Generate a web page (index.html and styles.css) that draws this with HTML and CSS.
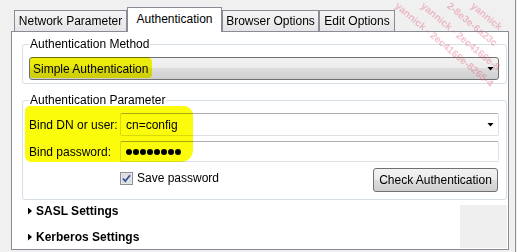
FILE: index.html
```html
<!DOCTYPE html>
<html lang="en">
<head>
  <meta charset="UTF-8" />
  <title>Authentication</title>
  <link rel="stylesheet" href="styles.css">
</head>
<body>
  <div class="window">
    <div class="tabs">
      <div class="tab tab-network">Network Parameter</div>
      <div class="tab tab-auth active">Authentication</div>
      <div class="tab tab-browser">Browser Options</div>
      <div class="tab tab-edit">Edit Options</div>
    </div>

    <div class="panel">
      <!-- Authentication Method -->
      <fieldset class="group">
        <legend>Authentication Method</legend>
        <div class="combo">
          <span class="combo-text">Simple Authentication</span>
          <span class="arrow"></span>
        </div>
      </fieldset>

      <!-- Authentication Parameter -->
      <fieldset class="group group-param">
        <legend>Authentication Parameter</legend>
        <div class="row">
          <label>Bind DN or user:</label>
          <div class="field field-combo">
            <span class="combo-text">cn=config</span>
            <span class="arrow"></span>
          </div>
        </div>
        <div class="row row-pass">
          <label>Bind password:</label>
          <div class="field field-pass">
            <span class="dot"></span><span class="dot"></span><span class="dot"></span><span class="dot"></span>
            <span class="dot"></span><span class="dot"></span><span class="dot"></span><span class="dot"></span>
          </div>
        </div>
        <div class="row row-check">
          <span class="check">
            <svg width="13" height="13" viewBox="0 0 13 13">
              <rect x="0.5" y="0.5" width="12" height="12" fill="#f4f4f4" stroke="#8f8f8f" />
              <rect x="2" y="2" width="9" height="9" fill="#dfe3ea" stroke="#b9bfca" stroke-width="0.5" />
              <path d="M3 6.5 L5.3 9.2 L10 3.3" fill="none" stroke="#3c4f8c" stroke-width="1.8" />
            </svg>
            Save password
          </span>
          <button class="btn">Check Authentication</button>
        </div>
      </fieldset>

      <div class="sections">
        <div class="section-list">
          <div class="section"><span class="triangle"></span>SASL Settings</div>
          <div class="section"><span class="triangle"></span>Kerberos Settings</div>
        </div>
        <div class="filler"></div>
      </div>

      <!-- marker highlights -->
      <div class="highlight hl-method"></div>
      <div class="highlight hl-bind"></div>
    </div>

    <div class="watermark">
      <span class="wm wm-1">yannick - 2ec4166e-8265-4</span>
      <span class="wm wm-2">yannick - 2ec4166e-8</span>
      <span class="wm wm-3">2-8e3e-6a23c</span>
      <span class="wm wm-4">yannick</span>
    </div>
  </div>
</body>
</html>
```

FILE: styles.css
```css
body {
  margin: 0;
  background: #f0f0f0;
  font: 12px "Liberation Sans", Arial, sans-serif;
  color: #000;
  overflow: hidden;
}

.window {
  position: relative;
  box-sizing: border-box;
  width: 516px;
  height: 252px;
  padding: 7px 0 0 11px;
  border-right: 1px solid #8e8f8f;
  overflow: hidden;
}

/* tabs */
.tabs {
  display: flex;
  align-items: flex-end;
  height: 25px;
  margin: 0 0 -1px 3px;
}

.tab {
  box-sizing: border-box;
  height: 22px;
  border: 1px solid #898c95;
  border-bottom: none;
  background: linear-gradient(#f5f5f5, #e4e4e4);
  line-height: 20px;
  text-align: center;
  white-space: nowrap;
}

.tab-network { width: 113px; }
.tab-auth { width: 95px; }
.tab-browser { width: 97px; }
.tab-edit { width: 76px; }

.tab.active {
  position: relative;
  z-index: 1;
  height: 25px;
  padding-top: 1px;
  background: #fff;
}

/* panel */
.panel {
  position: relative;
  box-sizing: border-box;
  width: 498px;
  height: 219px;
  border: 1px solid #898c95;
  background: #fff;
  padding: 5px 1px 0 10px;
}

.group {
  margin: 0;
  padding: 6px 7px 3px 6px;
  border: 1px solid #d5dfe5;
  border-radius: 3px;
  min-width: 0;
}

.group legend {
  padding: 0 1px;
  line-height: 14px;
}

.group-param {
  margin-top: 9px;
  padding-bottom: 7px;
}

.combo {
  box-sizing: border-box;
  height: 23px;
  display: flex;
  align-items: center;
  padding: 0 4px 0 3px;
  border: 1px solid #707070;
  border-radius: 3px;
  background: linear-gradient(#f2f2f2, #ebebeb 50%, #dddddd 50%, #cfcfcf);
}

.combo-text {
  flex: 1;
}

.arrow {
  width: 7px;
  height: 4px;
  background: #000;
  clip-path: polygon(0 0, 100% 0, 50% 100%);
}

.row {
  display: flex;
  align-items: center;
}

.row label {
  width: 91px;
}

.field {
  flex: 1;
  box-sizing: border-box;
  display: flex;
  align-items: center;
  padding: 0 4px 0 5px;
  border: 1px solid #dcdfe4;
  border-top-color: #abadb3;
  border-radius: 2px;
  background: #fff;
}

.field-combo {
  height: 23px;
}

.row-pass {
  margin-top: 5px;
}

.field-pass {
  height: 21px;
}

.dot {
  width: 6px;
  height: 6px;
  margin-right: 1px;
  border-radius: 50%;
  background: #000;
}

.row-check {
  margin-top: 6px;
  padding-left: 91px;
}

.check {
  display: flex;
  align-items: center;
  gap: 4px;
  margin-bottom: 4px;
}

.check svg {
  display: block;
}

.btn {
  box-sizing: border-box;
  width: 125px;
  height: 24px;
  margin: 0 1px 0 auto;
  padding: 0;
  border: 1px solid #707070;
  border-radius: 3px;
  background: linear-gradient(#f2f2f2, #ebebeb 50%, #dddddd 50%, #cfcfcf);
  font: inherit;
  color: #000;
}

/* collapsible sections */
.sections {
  display: flex;
}

.section-list {
  flex: 1;
  display: flex;
  flex-direction: column;
  gap: 4px;
}

.section {
  height: 22px;
  display: flex;
  align-items: center;
  padding-left: 6px;
  font-weight: bold;
}

.triangle {
  width: 4px;
  height: 7px;
  margin-right: 4px;
  background: #000;
  clip-path: polygon(0 0, 100% 50%, 0 100%);
}

.filler {
  width: 47px;
  height: 43px;
  margin-top: 5px;
  background: #efefef;
}

/* yellow marker */
.highlight {
  position: absolute;
  background: #fbfb0c;
  mix-blend-mode: multiply;
}

.hl-method {
  left: 18px;
  top: 25px;
  width: 122px;
  height: 21px;
  border-radius: 3px 5px 4px 3px;
}

.hl-bind {
  left: 13px;
  top: 74px;
  width: 168px;
  height: 56px;
  border-radius: 5px 9px 12px 6px;
}

/* watermark */
.watermark {
  position: absolute;
  inset: 0;
  pointer-events: none;
}

.wm {
  position: absolute;
  top: 0;
  transform: rotate(40deg);
  transform-origin: left top;
  white-space: nowrap;
  font-size: 10px;
  font-weight: bold;
  color: rgba(220, 80, 110, 0.35);
}

.wm-1 { left: 400px; }
.wm-2 { left: 426px; }
.wm-3 { left: 452px; }
.wm-4 { left: 476px; }
```
